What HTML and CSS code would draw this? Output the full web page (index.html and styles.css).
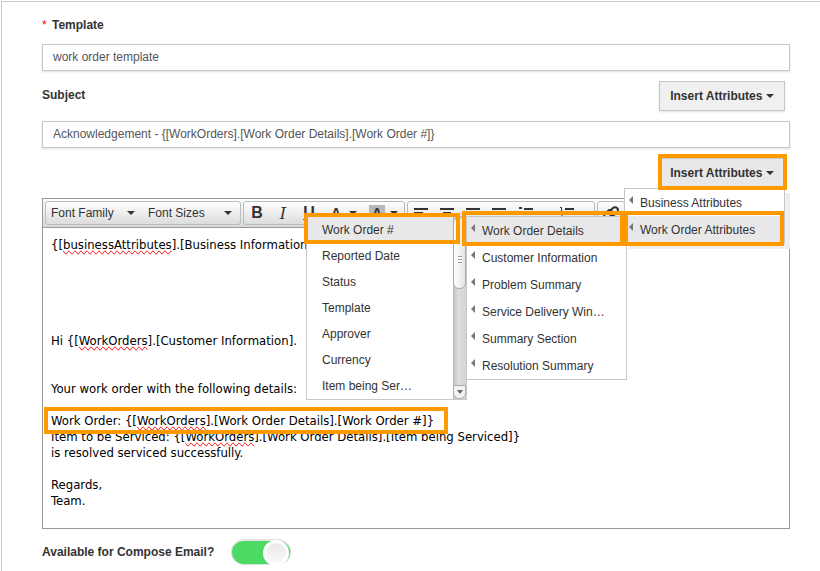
FILE: index.html
```html
<!DOCTYPE html>
<html lang="en">
<head>
  <meta charset="UTF-8">
  <meta name="viewport" content="width=device-width, initial-scale=1.0">
  <title>Template</title>
  <link rel="stylesheet" href="styles.css">
</head>
<body>
  <form class="template-form">
    <label class="title required" for="template">Template</label>
    <input class="text" type="text" id="template" value="work order template">

    <div class="row subject-row">
      <label class="title" for="subject">Subject</label>
      <button type="button" class="insert">Insert Attributes <span class="caret"></span></button>
    </div>
    <input class="text" type="text" id="subject" value="Acknowledgement - {[WorkOrders].[Work Order Details].[Work Order #]}">

    <div class="row">
      <div class="dropdown">
        <button type="button" class="insert active marked">Insert Attributes <span class="caret"></span></button>
        <ul class="menu menu-main">
          <li>Business Attributes</li>
          <li class="selected marked">Work Order Attributes
            <ul class="menu menu-groups">
              <li class="selected marked">Work Order Details
                <div class="menu menu-fields">
                  <ul>
                    <li class="selected marked">Work Order #</li>
                    <li>Reported Date</li>
                    <li>Status</li>
                    <li>Template</li>
                    <li>Approver</li>
                    <li>Currency</li>
                    <li>Item being Ser…</li>
                  </ul>
                  <div class="scrollbar">
                    <div class="thumb"></div>
                    <div class="scroll-down"><span class="caret"></span></div>
                  </div>
                </div>
              </li>
              <li>Customer Information</li>
              <li>Problem Summary</li>
              <li>Service Delivery Win…</li>
              <li>Summary Section</li>
              <li>Resolution Summary</li>
            </ul>
          </li>
        </ul>
      </div>
    </div>

    <div class="editor">
      <div class="toolbar">
        <div class="group">
          <button type="button" class="list family">Font Family <span class="caret"></span></button>
          <button type="button" class="list sizes">Font Sizes <span class="caret"></span></button>
        </div>
        <div class="group">
          <button type="button" class="tool bold" aria-label="Bold">B</button>
          <button type="button" class="tool italic" aria-label="Italic">I</button>
          <button type="button" class="tool underline" aria-label="Underline">U</button>
          <button type="button" class="tool color" aria-label="Text color"><span>A</span><span class="caret"></span></button>
          <button type="button" class="tool color back" aria-label="Background color"><span>A</span><span class="caret"></span></button>
        </div>
        <div class="group">
          <button type="button" class="tool" aria-label="Align left"><svg width="14" height="14"><path d="M0 3h14M0 7h9M0 11h14"/></svg></button>
          <button type="button" class="tool" aria-label="Align center"><svg width="14" height="14"><path d="M0 3h14M3 7h8M0 11h14"/></svg></button>
          <button type="button" class="tool" aria-label="Align right"><svg width="14" height="14"><path d="M0 3h14M5 7h9M0 11h14"/></svg></button>
          <button type="button" class="tool" aria-label="Justify"><svg width="14" height="14"><path d="M0 3h14M0 7h14M0 11h14"/></svg></button>
          <button type="button" class="tool split" aria-label="Bullet list"><svg width="14" height="14"><path d="M0 2h3M5 3h9M0 7h3M5 8h9M0 12h3M5 13h9"/></svg><span class="caret"></span></button>
          <button type="button" class="tool split" aria-label="Numbered list"><svg width="14" height="14"><path d="M5 3h9M5 8h9M5 13h9"/><path class="thin" d="M0 1.5h1.5v5M0 8.500h2v2h-2v2h2"/></svg><span class="caret"></span></button>
        </div>
        <div class="group last">
          <button type="button" class="tool" aria-label="Insert link"><svg width="16" height="16"><path d="M7 6l3-3a2.500 2.500 0 0 1 4 4l-3 3a2.500 2.500 0 0 1-4 0M9 10l-3 3a2.500 2.500 0 0 1-4-4l3-3a2.500 2.500 0 0 1 4 0"/></svg></button>
        </div>
      </div>
      <div class="content">
        <p>{[<u>businessAttributes</u>].[Business Information]</p>
        <p class="greeting">Hi {[<u>WorkOrders</u>].[Customer Information].</p>
        <p class="intro">Your work order with the following details:</p>
        <p><span class="marked">Work Order: {[<u>WorkOrders</u>].[Work Order Details].[Work Order #]}</span><br>
          Item to be Serviced: {[<u>WorkOrders</u>].[Work Order Details].[Item being Serviced]}<br>
          is resolved serviced successfully.</p>
        <p>Regards,<br>Team.</p>
      </div>
    </div>

    <div class="row compose">
      <label class="title" for="compose">Available for Compose Email?</label>
      <input class="toggle" type="checkbox" id="compose" checked>
    </div>
  </form>
</body>
</html>
```
FILE: styles.css
```css
body {
  font-family: "Liberation Sans", Arial, sans-serif;
  font-size: 12px;
  color: #333;
  background-color: #fff;
  margin: 1px 0 0 1px;
  overflow: hidden;
}

* {
  box-sizing: border-box;
}

button, input {
  font: inherit;
  color: inherit;
}

.template-form {
  border-top: 1px solid #c8c8c8;
  border-left: 1px solid #c8c8c8;
  padding: 15px 30px 10px 40px;
}

.title {
  display: block;
  font-weight: bold;
  line-height: 16px;
}

.required {
  margin-bottom: 11px;
}

.required::before {
  content: "*";
  color: #f00;
  font-weight: normal;
  display: inline-block;
  width: 10px;
}

.text {
  display: block;
  width: 100%;
  height: 27px;
  padding: 0 10px 2px;
  border: 1px solid #c8c8c8;
  box-shadow: 0 1px 2px rgba(0, 0, 0, 0.12);
  color: #555;
}

.row {
  display: flex;
  justify-content: flex-end;
  padding: 10px 5px 10px 0;
}

.subject-row {
  justify-content: space-between;
}

.subject-row .title {
  margin-top: 6px;
}

.insert {
  position: relative;
  display: block;
  height: 30px;
  width: 126px;
  padding: 0;
  background-color: #f0f0f0;
  border: 1px solid #c8c8c8;
  box-shadow: 0 1px 2px rgba(0, 0, 0, 0.12);
  font-weight: bold;
}

.insert.active {
  background-color: #e8e8e8;
}

.caret {
  display: inline-block;
  border: 4px solid transparent;
  border-top: 4px solid #333;
  border-bottom: 0;
  vertical-align: 2px;
}

.marked {
  position: relative;
}

.marked::after {
  content: "";
  position: absolute;
  border: 4px solid #ff9900;
  pointer-events: none;
  z-index: 3;
}

.insert.marked::after {
  inset: -5px -3px -3px -2px;
}

.dropdown {
  position: relative;
}

/* menus */
.menu {
  position: absolute;
  width: 161px;
  margin: 0;
  padding: 0;
  background-color: #fff;
  border: 1px solid #c8c8c8;
  z-index: 2;
}

.menu ul {
  list-style: none;
  margin: 0;
  padding: 0;
}

.menu li {
  position: relative;
  height: 27px;
  line-height: 27px;
  padding: 1px 0 0 15px;
  list-style: none;
  white-space: nowrap;
}

.menu .selected {
  background-color: #e8e8e8;
}

.menu-main > li::before,
.menu-groups > li::before {
  content: "";
  position: absolute;
  left: 4px;
  top: 7px;
  border: 4px solid transparent;
  border-right-color: #777;
  border-left: 0;
}

.menu-main {
  top: 30px;
  right: 0;
  box-shadow: 5px 5px 0 #eee;
}

.menu .menu-groups {
  top: 0;
  right: 100%;
  margin-right: -2px;
}

.menu-fields {
  display: flex;
  top: -1px;
  right: 100%;
}

.menu-fields ul {
  flex: 1;
}

.menu .menu-fields li {
  height: 26px;
  line-height: 26px;
  padding-top: 0;
}

.menu-main > .marked::after {
  inset: -5px 0 -3px -1px;
}

.menu-groups > .marked::after {
  inset: -6px 2px -2px -5px;
}

.menu-fields .marked::after {
  inset: -4px -7px -1px -3px;
}

.scrollbar {
  display: flex;
  flex-direction: column;
  justify-content: space-between;
  width: 13px;
  background: linear-gradient(to right, #bbb, #ddd 40%, #d4d4d4);
}

.thumb {
  height: 72px;
  border: 1px solid #aaa;
  border-radius: 6px;
  background: repeating-linear-gradient(#999 0 1px, #fff 1px 3px) center 38px / 4px 7px no-repeat, linear-gradient(to right, #fff, #e4e4e4);
}

.scroll-down {
  height: 14px;
  border: 1px solid #aaa;
  border-radius: 0 0 6px 6px;
  background-color: #f4f4f4;
}

.scroll-down .caret {
  border-width: 4px 3px 0;
  border-top-color: #666;
  display: block;
  width: 6px;
  margin: 4px auto 0;
}

/* editor */
.editor {
  border: 1px solid #999;
}

.toolbar {
  display: flex;
  gap: 2px;
  height: 29px;
  padding: 2px;
  overflow: hidden;
  background: linear-gradient(#fefefe, #d8d8d8);
  border-bottom: 1px solid #999;
}

.group {
  display: flex;
  flex: none;
  height: 24px;
  border: 1px solid #bbb;
  border-radius: 3px;
  background: linear-gradient(#fff, #dcdcdc);
}

.toolbar button {
  display: flex;
  align-items: center;
  padding: 0;
  border: 0;
  background: none;
}

.toolbar .list {
  justify-content: space-between;
  width: 97px;
  padding: 0 8px 0 5px;
}

.toolbar .tool {
  justify-content: center;
  width: 26px;
  font-size: 16px;
}

.toolbar .bold {
  font-weight: bold;
}

.toolbar .italic {
  font-family: "DejaVu Serif", serif;
  font-style: italic;
}

.toolbar .underline {
  font-weight: bold;
  text-decoration: underline;
}

.toolbar .color,
.toolbar .split {
  width: 41px;
  gap: 5px;
}

.toolbar .color {
  font-size: 14px;
  font-weight: bold;
}

.color span:first-child {
  width: 16px;
}

.back span:first-child {
  background-color: #b8b8b8;
}

.toolbar svg {
  flex: none;
  fill: none;
  stroke: #333;
  stroke-width: 2px;
}

.toolbar .thin {
  stroke-width: 1px;
}

.content {
  min-height: 300px;
  padding: 9px 8px 7px;
  color: #000;
  font-family: "DejaVu Sans Condensed", "DejaVu Sans", sans-serif;
  font-size: 13px;
  line-height: 16px;
}

.content p {
  margin: 0 0 16px;
}

.content p:last-child {
  margin-bottom: 0;
}

.content .greeting {
  margin: 80px 0 32px;
}

.content u {
  text-decoration: underline wavy #f00 1px;
  text-decoration: spelling-error;
}

.content .marked::after {
  inset: -6px -14px -6px -7px;
}

.compose {
  justify-content: flex-start;
  align-items: center;
  gap: 17px;
}

.toggle {
  appearance: none;
  display: flex;
  align-items: center;
  justify-content: flex-end;
  width: 60px;
  height: 26px;
  margin: 0;
  padding: 1px;
  border: 1px solid #ddd;
  border-top: 2px solid #e4e4e4;
  border-radius: 13px;
  background-color: #4cd964;
}

.toggle::before {
  content: "";
  width: 20px;
  height: 20px;
  border-radius: 50%;
  border: 3px solid #fff;
  background: linear-gradient(#e8e8e8, #fafafa);
}
```
